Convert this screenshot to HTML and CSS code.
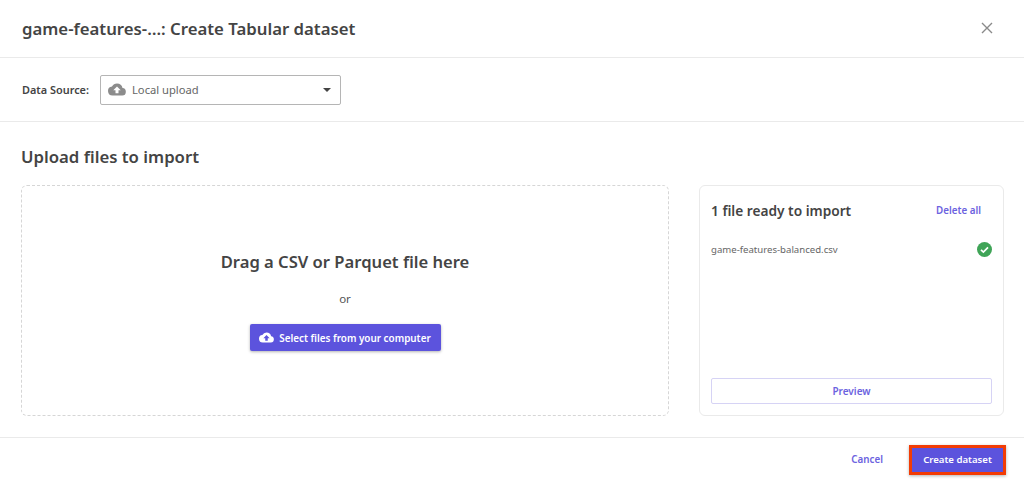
FILE: index.html
```html
<!DOCTYPE html>
<html lang="en">
<head>
<meta charset="utf-8">
<title>Create Tabular dataset</title>
<link rel="stylesheet" href="styles.css">
</head>
<body>
<div class="dialog">
  <header class="head">
    <h1 class="title">game-features-…: Create Tabular dataset</h1>
    <svg class="close" width="12" height="12" viewBox="0 0 12 12"><path d="M1 1l10 10M11 1L1 11" stroke="#8a8a8a" stroke-width="1.4" fill="none"/></svg>
  </header>
  <section class="source">
    <span class="source-label">Data Source:</span>
    <div class="select">
      <svg class="cloud" width="18" height="13" viewBox="0 0 24 16"><path fill="#8c8c8c" d="M19.35 6.04A7.49 7.49 0 0 0 12 0a7.5 7.5 0 0 0-6.65 4.04A6 6 0 0 0 6 16h13a5 5 0 0 0 .35-9.96zM14 9v4h-4V9H7l5-5 5 5h-3z"/></svg>
      <span class="select-text">Local upload</span>
      <span class="caret"></span>
    </div>
  </section>
  <main class="body">
    <h2 class="section-title">Upload files to import</h2>
    <div class="columns">
      <div class="drop">
        <div class="drop-title">Drag a CSV or Parquet file here</div>
        <div class="drop-or">or</div>
        <button class="btn-primary select-btn">
          <svg width="15" height="11" viewBox="0 0 24 16"><path fill="#fff" d="M19.35 6.04A7.49 7.49 0 0 0 12 0a7.5 7.5 0 0 0-6.65 4.04A6 6 0 0 0 6 16h13a5 5 0 0 0 .35-9.96zM14 9v4h-4V9H7l5-5 5 5h-3z"/></svg>
          <span>Select files from your computer</span>
        </button>
      </div>
      <aside class="panel">
        <div class="panel-head">
          <span class="panel-title">1 file ready to import</span>
          <a class="link">Delete all</a>
        </div>
        <div class="file-row">
          <span class="file-name">game-features-balanced.csv</span>
          <svg width="15" height="15" viewBox="0 0 15 15"><circle cx="7.5" cy="7.5" r="7.5" fill="#3fa457"/><path d="M4 7.8l2.4 2.3L11 5.3" stroke="#fff" stroke-width="1.7" fill="none"/></svg>
        </div>
        <button class="btn-outline">Preview</button>
      </aside>
    </div>
  </main>
  <footer class="foot">
    <a class="link cancel">Cancel</a>
    <button class="btn-primary create">Create dataset</button>
  </footer>
</div>
</body>
</html>
```
FILE: styles.css
```css
* { box-sizing: border-box; }
html, body { margin: 0; padding: 0; }
body {
  width: 1024px;
  height: 480px;
  overflow: hidden;
  background: #fff;
  color: #444;
  font-family: "Noto Sans", "Open Sans", sans-serif;
}
.dialog { display: flex; flex-direction: column; height: 480px; }
.head {
  height: 58px;
  border-bottom: 1px solid #eaeaea;
  display: flex;
  align-items: center;
  justify-content: space-between;
  padding: 0 31px 0 22px;
}
.close { margin-bottom: 2px; }
.title { margin: 0; font-size: 16.75px; font-weight: 600; color: #444; }
.source {
  height: 64px;
  border-bottom: 1px solid #eaeaea;
  display: flex;
  align-items: center;
  padding: 0 0 0 22px;
}
.source-label { font-size: 10.9px; font-weight: 600; width: 78px; color: #444; }
.select {
  width: 241px;
  height: 30px;
  border: 1px solid #b5b5b5;
  border-radius: 2px;
  display: flex;
  align-items: center;
  padding: 0 9px 0 7px;
}
.cloud { margin-right: 6px; }
.select-text { font-size: 11.2px; color: #666; flex: 1; }
.caret {
  width: 0;
  height: 0;
  border-left: 4px solid transparent;
  border-right: 4px solid transparent;
  border-top: 4px solid #444;
}
.body { flex: 1; padding: 24px 20px 0 21px; }
.section-title { margin: 0; font-size: 16.75px; font-weight: 600; line-height: 22px; color: #444; }
.columns { display: flex; gap: 30px; margin-top: 17px; }
.drop {
  width: 648px;
  height: 231px;
  border: 1px dashed #d6d6d6;
  border-radius: 6px;
  display: flex;
  flex-direction: column;
  align-items: center;
  padding-top: 65px;
}
.drop-title { font-size: 16.6px; font-weight: 600; line-height: 22px; color: #444; }
.drop-or { font-size: 11.5px; color: #555; margin-top: 18px; line-height: 16px; }
.btn-primary {
  background: #5c53dd;
  color: #fff;
  border: none;
  border-radius: 2px;
  font-family: inherit;
  font-weight: 600;
  font-size: 9.6px;
  white-space: nowrap;
  display: flex;
  align-items: center;
  justify-content: center;
}
.select-btn {
  width: 191px;
  height: 27px;
  margin-top: 17px;
  gap: 5px;
  font-size: 9.9px;
  box-shadow: 0 1px 3px rgba(0,0,0,.3);
}
.panel {
  width: 305px;
  height: 231px;
  border: 1px solid #eaeaea;
  border-radius: 6px;
  padding: 13px 11px 11px 11px;
  display: flex;
  flex-direction: column;
}
.panel-head { display: flex; justify-content: space-between; align-items: center; height: 22px; padding-right: 11px; }
.panel-title { font-size: 13.7px; font-weight: 600; color: #444; }
.link { color: #6c63e0; font-size: 9.8px; font-weight: 600; }
.file-row {
  display: flex;
  justify-content: space-between;
  align-items: center;
  margin-top: 21px;
}
.file-name { font-size: 9.6px; color: #666; }
.btn-outline {
  margin-top: auto;
  width: 281px;
  height: 26px;
  background: #fff;
  border: 1px solid #d6d3f5;
  border-radius: 2px;
  color: #6c63e0;
  font-family: inherit;
  font-size: 10px;
  font-weight: 600;
}
.foot {
  height: 43px;
  border-top: 1px solid #eaeaea;
  display: flex;
  align-items: center;
  justify-content: flex-end;
  padding: 1px 18px 0 0;
}
.cancel { margin-right: 26px; }
.create {
  width: 97px;
  height: 30px;
  border: 3px solid #f23c05;
  border-radius: 0;
  box-shadow: 0 1px 3px rgba(0,0,0,.3);
}
```
